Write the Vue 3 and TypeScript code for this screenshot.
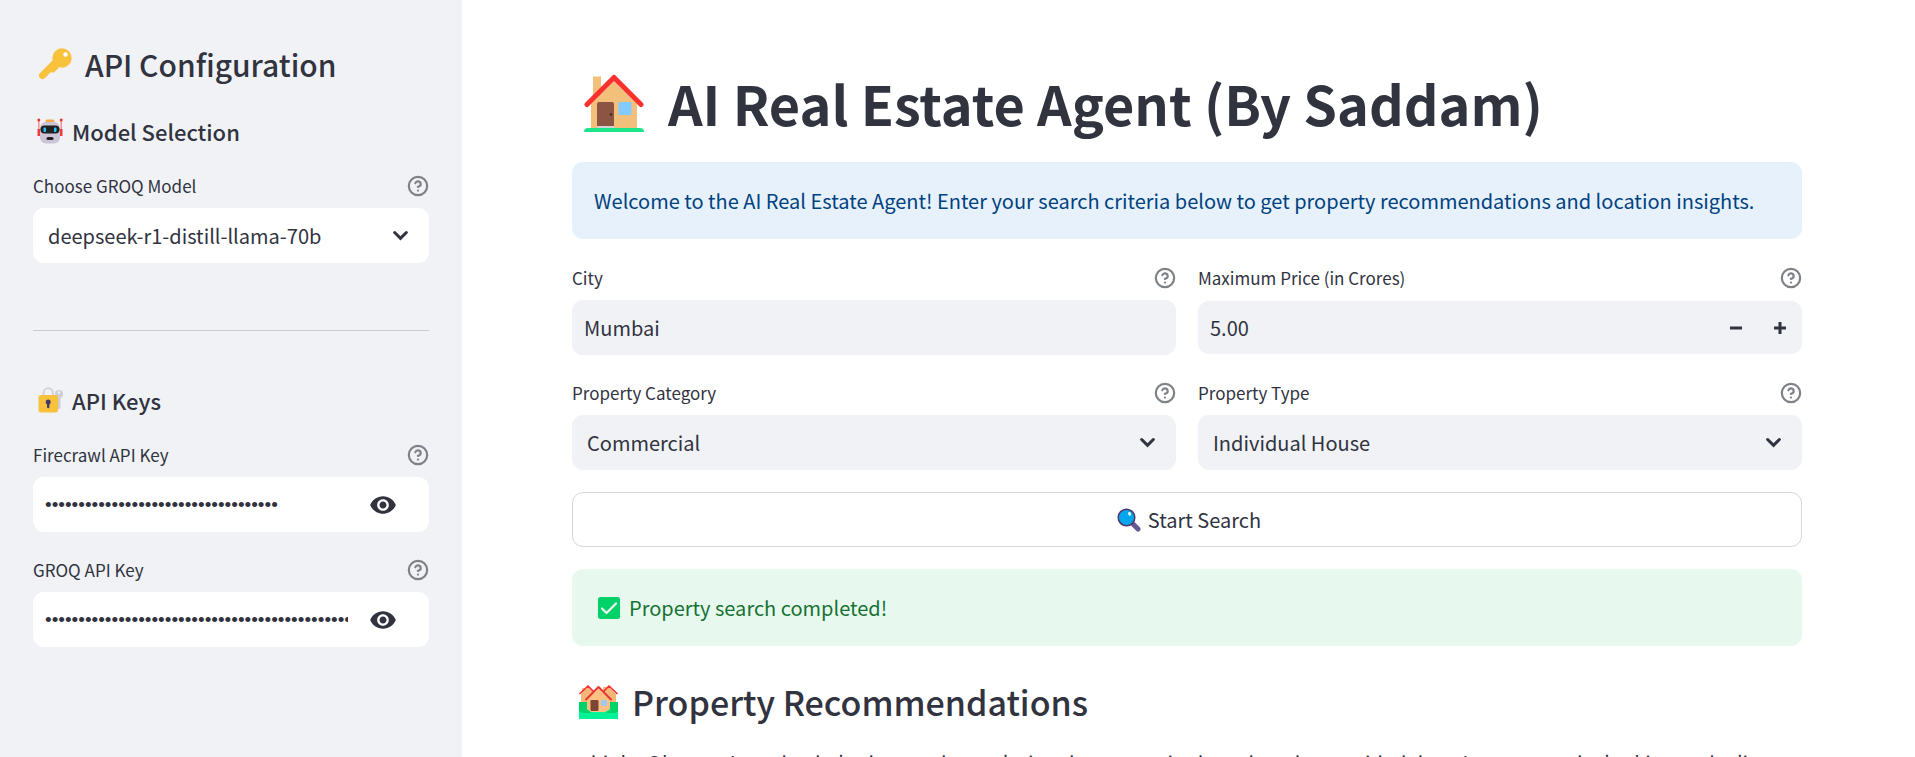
<script setup lang="ts">
import { ref } from 'vue'

interface KeyField {
  id: string
  label: string
  value: string
  visible: boolean
}

const model = ref('deepseek-r1-distill-llama-70b')
const models: string[] = ['deepseek-r1-distill-llama-70b', 'llama-3.3-70b-versatile']

const keys = ref<KeyField[]>([
  { id: 'firecrawl-key', label: 'Firecrawl API Key', value: 'x'.repeat(35), visible: false },
  { id: 'groq-key', label: 'GROQ API Key', value: 'x'.repeat(56), visible: false },
])

const city = ref('Mumbai')
const price = ref('5.00')
const category = ref('Commercial')
const propertyType = ref('Individual House')

function step(delta: number): void {
  price.value = Math.max(0, Number(price.value) + delta).toFixed(2)
}
</script>

<template>
  <div class="shell">
    <!-- shared line icons -->
    <svg class="sprite" aria-hidden="true">
      <symbol id="help" viewBox="0 0 24 24">
        <g fill="none" stroke="currentColor" stroke-width="2.400" stroke-linecap="round" stroke-linejoin="round">
          <circle cx="12" cy="12" r="10" />
          <path d="M9.09 9a3 3 0 0 1 5.83 1c0 2-3 3-3 3" />
          <path d="M12 17h.01" />
        </g>
      </symbol>
      <symbol id="chevron" viewBox="0 0 16 16">
        <path d="M2.500 5.200 8 10.600l5.500-5.400" fill="none" stroke="currentColor" stroke-width="2.900" stroke-linecap="round" stroke-linejoin="miter" />
      </symbol>
      <symbol id="eye" viewBox="0 0 24 24">
        <path fill="currentColor" d="M12 4.500C7 4.500 2.730 7.610 1 12c1.730 4.390 6 7.500 11 7.500s9.270-3.110 11-7.500c-1.730-4.390-6-7.500-11-7.500zM12 17c-2.760 0-5-2.240-5-5s2.240-5 5-5 5 2.240 5 5-2.240 5-5 5zm0-8c-1.660 0-3 1.340-3 3s1.340 3 3 3 3-1.340 3-3-1.340-3-3-3z" />
      </symbol>
    </svg>

    <aside class="sidebar">
      <h2 class="side-title">
        <svg class="emoji-key" viewBox="0 0 33 33" aria-hidden="true">
          <path d="M17 14 3.500 27.500" stroke="#f9c23c" stroke-width="7" stroke-linecap="round" />
          <path d="m14 22 3.500-3.500" stroke="#f9c23c" stroke-width="5" stroke-linecap="round" />
          <circle cx="23" cy="10" r="9.700" fill="#f9c23c" />
          <circle cx="26.500" cy="6.500" r="2.200" fill="#fff" />
        </svg>
        API Configuration
      </h2>

      <h3 class="side-heading">
        <svg class="emoji-small" viewBox="0 0 26 26" aria-hidden="true">
          <path d="M1.800 2v15M24.200 2v15" stroke="#f8817f" stroke-width="1.300" />
          <circle cx="1.800" cy="2" r="1.500" fill="#e9342f" />
          <circle cx="24.200" cy="2" r="1.500" fill="#e9342f" />
          <path d="M1.800 11v7M24.200 11v7" stroke="#f03a3a" stroke-width="2.600" />
          <rect x="8.500" y="1.500" width="9" height="4" rx="1.500" fill="#f5a94b" />
          <rect x="3" y="4" width="20" height="21.500" rx="6" fill="#cdc4d6" />
          <rect x="3.500" y="7.500" width="19" height="8" rx="4" fill="#212121" />
          <rect x="6.500" y="9.500" width="2.500" height="4.500" rx="1" fill="#26c9fc" />
          <rect x="17" y="9.500" width="2.500" height="4.500" rx="1" fill="#26c9fc" />
          <rect x="9.500" y="19" width="7" height="3" rx="1.500" fill="#212121" />
        </svg>
        Model Selection
      </h3>

      <div class="field">
        <div class="label-row">
          <label for="model">Choose GROQ Model</label>
          <button class="help" type="button" aria-label="Help"><svg><use href="#help" /></svg></button>
        </div>
        <div class="control light">
          <select id="model" v-model="model">
            <option v-for="m in models" :key="m">{{ m }}</option>
          </select>
          <svg class="chevron" aria-hidden="true"><use href="#chevron" /></svg>
        </div>
      </div>

      <hr />

      <h3 class="side-heading">
        <svg class="emoji-small" viewBox="0 0 26 26" aria-hidden="true">
          <g fill="#cfcdd6">
            <circle cx="22" cy="7" r="4" />
            <path d="M20.500 10h3v11l-1.500 1.500-1.500-1.500z" />
          </g>
          <circle cx="22" cy="5.500" r="1.200" fill="#f0f2f6" />
          <path d="M6.500 10V6a4.700 4.700 0 0 1 9.400 0v4" fill="none" stroke="#d3d3d3" stroke-width="2" />
          <rect x="1.500" y="8" width="19.500" height="17.500" rx="2.500" fill="#f9c23c" />
          <circle cx="11.200" cy="15" r="2.500" fill="#433b6b" />
          <path d="M11.200 15v5" stroke="#433b6b" stroke-width="2.400" stroke-linecap="round" />
        </svg>
        API Keys
      </h3>

      <div v-for="k in keys" :key="k.id" class="field">
        <div class="label-row">
          <label :for="k.id">{{ k.label }}</label>
          <button class="help" type="button" aria-label="Help"><svg><use href="#help" /></svg></button>
        </div>
        <div class="control light">
          <input :id="k.id" v-model="k.value" class="secret" :type="k.visible ? 'text' : 'password'" />
          <button class="reveal" type="button" aria-label="Show key" @click="k.visible = !k.visible">
            <svg><use href="#eye" /></svg>
          </button>
        </div>
      </div>
    </aside>

    <main class="main">
      <h1>
        <svg class="emoji-house" viewBox="0 0 60 58" aria-hidden="true">
          <path d="M9 2.500h8v20H9zM7 30 30 7l23 23v25H7z" fill="#f3c07b" />
          <path d="M3 30.500 30 3.500l27 27" fill="none" stroke="#f8312f" stroke-width="5" stroke-linecap="round" stroke-linejoin="round" />
          <path d="M13 53V30a2 2 0 0 1 2-2h13a2 2 0 0 1 2 2v23z" fill="#8c5543" />
          <circle cx="27" cy="40.500" r="1.300" fill="#3b2a2a" />
          <rect x="34.500" y="28" width="13" height="13" rx="1" fill="#83cbff" />
          <path d="M13 52h17v3H13z" fill="#d3d3d3" />
          <path d="M0 58a4 4 0 0 1 4-4h52a4 4 0 0 1 4 4z" fill="#1de58c" />
        </svg>
        AI Real Estate Agent (By Saddam)
      </h1>

      <p class="alert info" role="status">
        Welcome to the AI Real Estate Agent! Enter your search criteria below to get property recommendations and location insights.
      </p>

      <form class="criteria" @submit.prevent>
        <div class="field">
          <div class="label-row">
            <label for="city">City</label>
            <button class="help" type="button" aria-label="Help"><svg><use href="#help" /></svg></button>
          </div>
          <div class="control"><input id="city" v-model="city" type="text" /></div>
        </div>

        <div class="field">
          <div class="label-row">
            <label for="price">Maximum Price (in Crores)</label>
            <button class="help" type="button" aria-label="Help"><svg><use href="#help" /></svg></button>
          </div>
          <div class="control number">
            <input id="price" v-model="price" type="text" inputmode="decimal" />
            <button class="step" type="button" aria-label="Decrease" @click="step(-0.5)">
              <svg viewBox="0 0 12 12"><path d="M0 6h12" /></svg>
            </button>
            <button class="step" type="button" aria-label="Increase" @click="step(0.5)">
              <svg viewBox="0 0 12 12"><path d="M0 6h12M6 0v12" /></svg>
            </button>
          </div>
        </div>

        <div class="field">
          <div class="label-row">
            <label for="category">Property Category</label>
            <button class="help" type="button" aria-label="Help"><svg><use href="#help" /></svg></button>
          </div>
          <div class="control">
            <select id="category" v-model="category">
              <option>Commercial</option>
              <option>Residential</option>
            </select>
            <svg class="chevron" aria-hidden="true"><use href="#chevron" /></svg>
          </div>
        </div>

        <div class="field">
          <div class="label-row">
            <label for="type">Property Type</label>
            <button class="help" type="button" aria-label="Help"><svg><use href="#help" /></svg></button>
          </div>
          <div class="control">
            <select id="type" v-model="propertyType">
              <option>Individual House</option>
              <option>Flat</option>
            </select>
            <svg class="chevron" aria-hidden="true"><use href="#chevron" /></svg>
          </div>
        </div>

        <button class="search" type="submit">
          <svg viewBox="0 0 24 24" aria-hidden="true">
            <path d="m16.500 16.500 4.500 4.500" stroke="#635994" stroke-width="5" stroke-linecap="round" />
            <circle cx="9.500" cy="9.500" r="8.300" fill="#00a6ed" stroke="#533566" stroke-width="1.500" />
            <ellipse cx="12.600" cy="5.800" rx="1.500" ry="1.900" fill="#e3f5ff" transform="rotate(-25 12.600 5.800)" />
          </svg>
          Start Search
        </button>
      </form>

      <p class="alert success" role="status">
        <svg viewBox="0 0 22 22" aria-hidden="true">
          <rect width="22" height="22" rx="2.500" fill="#00d26a" />
          <path d="m4 11.500 4.500 4.500L18 6.500" fill="none" stroke="#f4f4f4" stroke-width="2.200" stroke-linecap="round" stroke-linejoin="round" />
        </svg>
        Property search completed!
      </p>

      <h2 class="results-title">
        <svg class="emoji-houses" viewBox="0 0 39 34" aria-hidden="true">
          <path d="M3 3h4v6H3zM24 2h4v6h-4zM2 9l7-7 7 7v12H2zM23 9l7-7 7 7v12H23z" fill="#f3b878" />
          <path d="m1 8.500 8-7.500 5 5M38 8.500 30 1l-5 5" fill="none" stroke="#f8312f" stroke-width="1.700" stroke-linecap="round" stroke-linejoin="round" />
          <path d="M0 17h39v17H0z" fill="#00f397" />
          <path d="M0 17h8v8a5 5 0 0 1 4 3H3l-3-2zM39 17h-8v8a5 5 0 0 0-4 3h9l3-2z" fill="#00d26a" />
          <path d="M8 15 19.500 3.500 31 15v9l-5 3H12l-4-3z" fill="#ffc183" />
          <path d="M7 14.500 19.500 2 32 14.500" fill="none" stroke="#e8352f" stroke-width="2" stroke-linecap="round" stroke-linejoin="round" />
          <rect x="11.500" y="15" width="8" height="11" rx="1.200" fill="#7d4533" />
          <rect x="22" y="15" width="6" height="6" rx="1.500" fill="#9bcaf5" />
        </svg>
        Property Recommendations
      </h2>

      <p class="report">
        &lt;think&gt; Okay, so I need to help the user by analyzing the properties based on the provided data. Let me start by looking at the list
      </p>
    </main>
  </div>
</template>

<style>
body {
  margin: 0;
  background: #fff;
}
</style>

<style scoped>
* {
  box-sizing: border-box;
}

.shell {
  display: flex;
  height: 100vh;
  color: #31333f;
  font-family: "Noto Sans CJK SC", "Noto Sans", sans-serif;
  font-size: 20px;
  line-height: 35px;
}

.sprite {
  position: absolute;
  width: 0;
  height: 0;
}

svg {
  display: block;
  flex: none;
}

h1,
h2,
h3,
p {
  margin: 0;
}

button,
input,
select {
  margin: 0;
  padding: 0;
  border: 0;
  background: none;
  color: inherit;
  font: inherit;
}

.sidebar {
  flex: none;
  width: 462px;
  padding: 42px 33px;
  overflow: hidden;
  background: #f0f2f6;
}

.side-title {
  display: flex;
  align-items: center;
  gap: 13px;
  height: 44px;
  padding-left: 6px;
  font-size: 30px;
  font-weight: 500;
}

.emoji-key {
  width: 33px;
  height: 33px;
}

.side-heading {
  display: flex;
  align-items: center;
  gap: 9px;
  height: 36px;
  margin: 27px 0 21px;
  padding-left: 4px;
  font-size: 22px;
  font-weight: 500;
}

.emoji-small {
  width: 26px;
  height: 26px;
}

hr {
  height: 1px;
  margin: 67px 0 51px;
  border: 0;
  background: #cacccf;
}

.field + .field {
  margin-top: 22px;
}

.label-row {
  display: flex;
  align-items: center;
  justify-content: space-between;
  height: 38px;
  padding-bottom: 7px;
  font-size: 17px;
  line-height: 22px;
}

.help {
  color: #7f8188;
}

.help svg {
  width: 22px;
  height: 22px;
}

.control {
  display: flex;
  align-items: center;
  position: relative;
  height: 55px;
  border-radius: 11px;
  background: #f0f2f6;
}

.control.light {
  background: #fff;
}

.control input {
  flex: 1;
  min-width: 0;
  height: 100%;
  padding-left: 12px;
  outline: none;
}

.control .secret {
  font-family: "Liberation Sans", sans-serif;
  font-size: 19px;
}

.control select {
  width: 100%;
  height: 100%;
  padding: 0 48px 0 15px;
  appearance: none;
  outline: none;
}

.chevron {
  position: absolute;
  right: 20px;
  width: 17px;
  height: 17px;
  pointer-events: none;
}

.reveal {
  display: flex;
  align-items: center;
  justify-content: flex-end;
  width: 81px;
  padding-right: 32px;
}

.reveal svg {
  width: 28px;
  height: 28px;
}

.number {
  height: 53px;
  margin: 1px 0;
}

.step {
  display: flex;
  align-items: center;
  justify-content: center;
  width: 44px;
  height: 100%;
}

.step svg {
  width: 12px;
  height: 12px;
  fill: none;
  stroke: currentColor;
  stroke-width: 3;
}

.main {
  flex: 1;
  min-width: 0;
  padding: 60px 113px 0 110px;
  overflow: hidden;
}

h1 {
  display: flex;
  align-items: center;
  gap: 24px;
  height: 86px;
  padding-left: 12px;
  font-size: 54px;
  font-weight: 700;
  line-height: 72px;
}

.emoji-house {
  width: 60px;
  height: 58px;
}

.alert {
  display: flex;
  align-items: center;
  gap: 9px;
  min-height: 77px;
  padding: 21px 22px;
  border-radius: 11px;
}

.info {
  margin-top: 16px;
  background: #e7f1fb;
  color: #004280;
}

.success {
  margin-top: 22px;
  padding-left: 26px;
  background: #e7f9ee;
  color: #177233;
}

.success svg {
  width: 22px;
  height: 22px;
}

.criteria {
  display: grid;
  grid-template-columns: 1fr 1fr;
  gap: 22px;
  margin-top: 23px;
}

.criteria .field {
  margin-top: 0;
}

.search {
  display: flex;
  grid-column: 1 / -1;
  align-items: center;
  justify-content: center;
  gap: 7px;
  height: 55px;
  padding-left: 4px;
  border: 1px solid #d6d6d9;
  border-radius: 11px;
  background: #fff;
}

.search svg {
  width: 24px;
  height: 24px;
}

.results-title {
  display: flex;
  align-items: center;
  gap: 14px;
  margin-top: 32px;
  padding-left: 7px;
  font-size: 34px;
  font-weight: 500;
  line-height: 48px;
}

.emoji-houses {
  width: 39px;
  height: 34px;
}

.report {
  margin-top: 19px;
}
</style>
